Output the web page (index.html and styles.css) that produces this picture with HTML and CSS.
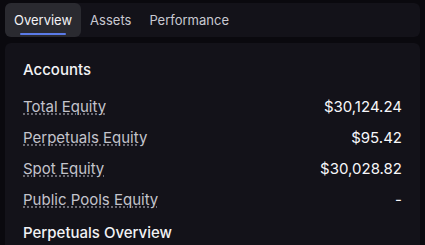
FILE: index.html
```html
<!DOCTYPE html>
<html lang="en">
<head>
<meta charset="utf-8">
<link rel="stylesheet" href="styles.css">
</head>
<body>
<div class="tabs">
    <div class="tab active">Overview</div>
    <div class="tab">Assets</div>
    <div class="tab">Performance</div>
</div>
<div class="panel">
    <div class="section-title">Accounts</div>
    <div class="row">
        <span class="label">Total Equity</span>
        <span class="value">$30,124.24</span>
    </div>
    <div class="row">
        <span class="label">Perpetuals Equity</span>
        <span class="value">$95.42</span>
    </div>
    <div class="row">
        <span class="label">Spot Equity</span>
        <span class="value">$30,028.82</span>
    </div>
    <div class="row">
        <span class="label">Public Pools Equity</span>
        <span class="value">-</span>
    </div>
    <div class="section-title next">Perpetuals Overview</div>
</div>
</body>
</html>
```

FILE: styles.css
```css
body {
    margin: 0;
    padding: 3px 5px;
    background-color: #0a090e;
    font-family: Inter, "Noto Sans", sans-serif;
    color: #f2f2f5;
    height: 100vh;
    box-sizing: border-box;
    display: flex;
    flex-direction: column;
    overflow: hidden;
}

.tabs {
    display: flex;
    flex-shrink: 0;
    height: 34px;
    background-color: #131219;
    border-radius: 6px;
}

.tab {
    display: flex;
    align-items: center;
    padding: 0 9px;
    font-size: 13px;
    color: #c9c9d1;
    position: relative;
}

.tab.active {
    background-color: #2a2a30;
    border-radius: 6px;
    color: #f2f2f5;
}

.tab.active::after {
    content: "";
    position: absolute;
    left: 15px;
    right: 15px;
    bottom: 2px;
    height: 2px;
    background-color: #5b7be8;
    border-radius: 1px;
}

.panel {
    flex: 1;
    margin-top: 6px;
    margin-bottom: -20px;
    background-color: #131219;
    border-radius: 6px;
    padding: 17px 18px 0;
}

.section-title {
    font-size: 15px;
    line-height: 20px;
    font-weight: 500;
    margin-bottom: 11px;
}

.section-title.next {
    margin-top: 8px;
}

.row {
    display: flex;
    justify-content: space-between;
    align-items: center;
    height: 31px;
    font-size: 15px;
    line-height: 20px;
}

.label {
    color: #c4c4cc;
    text-decoration: underline dotted #8a8a94;
    text-underline-offset: 2px;
}

.value {
    color: #f7f7fa;
}
```
